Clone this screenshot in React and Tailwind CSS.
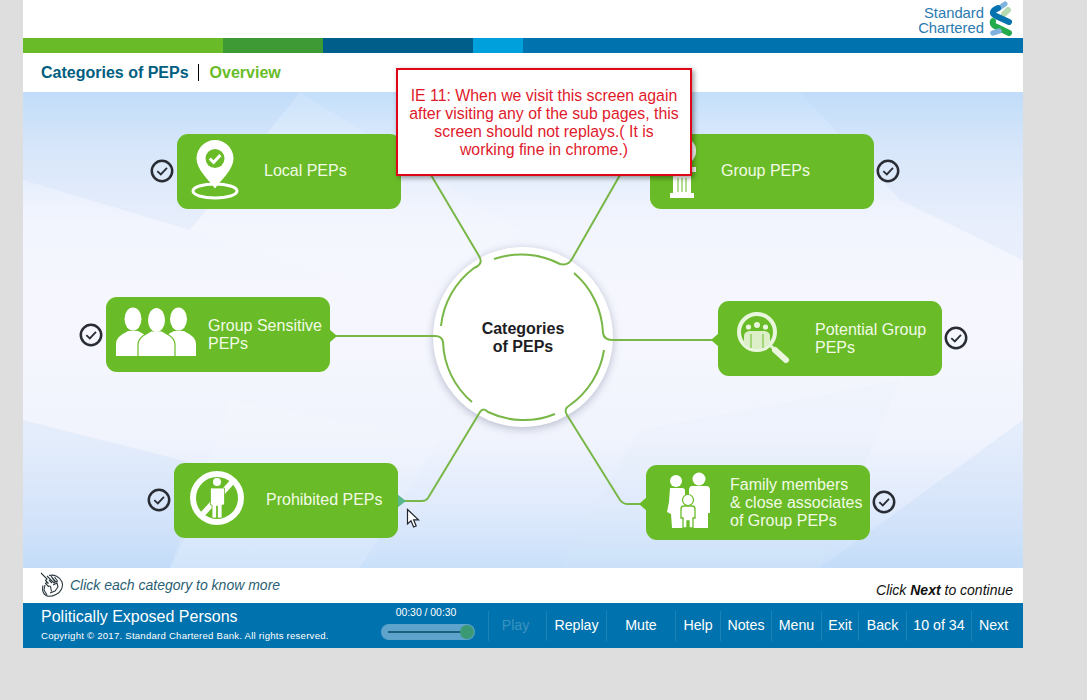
const G = "#69bc27";

function Check({ className }) {
  return (
    <svg className={className} width="24" height="24" viewBox="0 0 24 24" fill="none">
      <circle cx="12" cy="12" r="10.2" stroke="#292c33" strokeWidth="2.5" />
      <path d="M7.3 12.2 L10.8 15.4 L17 8.8" stroke="#292c33" strokeWidth="1.8" />
    </svg>
  );
}

function PinIcon() {
  return (
    <svg className="shrink-0" width="87" height="75" viewBox="0 0 87 75">
      <ellipse cx="38" cy="57" rx="22" ry="7" fill="none" stroke="#fff" strokeWidth="3" />
      <path d="M38 6a18.5 18.5 0 0 1 18.5 18.5c0 11-12 21-18.5 30c-6.5-9-18.5-19-18.5-30A18.5 18.5 0 0 1 38 6z" fill="#fff" />
      <circle cx="38" cy="24.5" r="9.5" fill={G} />
      <path d="M32.8 24.5l3.8 3.8l6.8-7.2" fill="none" stroke="#fff" strokeWidth="3" />
    </svg>
  );
}

function ColumnIcon() {
  return (
    <svg className="shrink-0" width="71" height="75" viewBox="0 0 71 75">
      <circle cx="32" cy="17" r="14" fill="#fff" />
      <rect x="30" y="33" width="16" height="5" fill="#fff" />
      <rect x="20" y="59" width="24" height="5" fill="#fff" />
      <rect x="23" y="40" width="18" height="19" fill="#fff" />
      <path d="M28 44v14M32 44v14M36 44v14" stroke={G} strokeWidth="1" />
    </svg>
  );
}

function PeopleIcon() {
  return (
    <svg className="shrink-0" width="102" height="75" viewBox="0 0 102 75">
      <ellipse cx="27" cy="22" rx="8.5" ry="11.5" fill="#fff" />
      <ellipse cx="72.5" cy="22" rx="8.5" ry="11.5" fill="#fff" />
      <path d="M10 59V47c0-7 7-10 12-13h10c6 3 11 6 11 13v12z" fill="#fff" />
      <path d="M90 59V47c0-7-7-10-12-13H68c-6 3-11 6-11 13v12z" fill="#fff" />
      <path d="M32 59.5V48c0-8 8-11 13-14h11c5 3 13 6 13 14v11.5z" fill="#fff" stroke={G} strokeWidth="1.2" />
      <ellipse cx="50.5" cy="23" rx="8.5" ry="12" fill="#fff" />
    </svg>
  );
}

function LensIcon() {
  return (
    <svg className="shrink-0" width="97" height="75" viewBox="0 0 97 75">
      <circle cx="39" cy="31" r="18" fill="none" stroke="#e9f5dc" strokeWidth="4" />
      <path d="M26 43v-8c0-3 2-4 5-5h16c3 1 5 2 5 5v8c-3 3-8 5-13 5s-10-2-13-5z" fill="#dcefc9" />
      <circle cx="30.5" cy="26" r="2.6" fill="#e9f5dc" />
      <circle cx="39" cy="24" r="3" fill="#e9f5dc" />
      <circle cx="47.5" cy="26" r="2.6" fill="#e9f5dc" />
      <path d="M33 33v14M45 33v14" stroke={G} strokeWidth="1" />
      <path d="M53 45l4 4" stroke="#e9f5dc" strokeWidth="3" />
      <path d="M57 49l11 10" stroke="#e9f5dc" strokeWidth="6" strokeLinecap="round" />
    </svg>
  );
}

function BanIcon() {
  return (
    <svg className="shrink-0" width="92" height="75" viewBox="0 0 92 75">
      <circle cx="43" cy="35" r="24" fill="none" stroke="#fff" strokeWidth="6" />
      <path d="M60 17L26 54" stroke="#fff" strokeWidth="5.5" />
      <circle cx="43" cy="19" r="4" fill="#fff" />
      <path d="M36.5 25h14v17h-2.5v13h-4.5V43h-1v12H38V42h-1.5z" fill="#fff" stroke={G} strokeWidth="0.8" />
    </svg>
  );
}

function FamilyIcon() {
  return (
    <svg className="shrink-0" width="84" height="75" viewBox="0 0 84 75">
      <circle cx="30" cy="16" r="6" fill="#fff" />
      <circle cx="53" cy="14" r="6.5" fill="#fff" />
      <path d="M24 23h12c2 0 3 1 3 3v22l-2 15H26l-1-14l-4-2l2-10z" fill="#fff" />
      <path d="M46 21h14c3 0 4 2 4 4v23h-2v15H47V44h-4V25c0-2 1-4 3-4z" fill="#fff" />
      <path d="M38 41h8c2 0 3 1 3 3v9h-2v10h-4v-7h-2v7h-4V53h-2v-9c0-2 1-3 3-3z" fill="#fff" stroke={G} strokeWidth="1.3" />
      <circle cx="42" cy="35" r="5.5" fill="#fff" stroke={G} strokeWidth="1.2" />
    </svg>
  );
}

function Node({ className, icon, lines, lift = "" }) {
  return (
    <div className={"absolute flex h-[75px] w-[224px] items-center rounded-[11px] bg-[#69bc27] " + className}>
      {icon}
      <div className={"whitespace-nowrap text-[16px] leading-[18px] text-[#f2fae6] " + lift}>
        {lines.map((l) => (
          <div key={l}>{l}</div>
        ))}
      </div>
    </div>
  );
}

function Logo() {
  return (
    <svg width="24" height="36" viewBox="0 0 24 36" fill="none" className="shrink-0">
      <path d="M16 3L9 8" stroke="#7fb2dc" strokeWidth="5" strokeLinecap="round" />
      <path d="M19 9L15 13" stroke="#b5d9b0" strokeWidth="6" strokeLinecap="round" />
      <path d="M9 7C2 10 3 13 7 15L20 21" stroke="#0473b0" strokeWidth="6" strokeLinecap="round" />
      <path d="M4 20C3 23 5 25 8 26L20 32" stroke="#23ac4c" strokeWidth="6" strokeLinecap="round" />
      <path d="M4 32L10 30" stroke="#7fb2dc" strokeWidth="5.5" strokeLinecap="round" />
    </svg>
  );
}

function HandIcon() {
  return (
    <svg width="24" height="26" viewBox="0 0 24 26" fill="none" stroke="#2d3a40" strokeWidth="1.1" className="shrink-0">
      <path d="M9 3.5C14 2 20 5 22 10c1.5 5-1 10-6 12.5c-4 2-8 2-10 1c-3-2-4-6-3-10" />
      <path d="M1 1l6 6l-1.5 1.5l3 3l-2-1l-1 1l3 3c1-1 1-1 2 0l1 5" />
      <path d="M7 4l7 7l1-1l-4-6M11 4l5 6l1.5-1l-3-4M9 8l3 3M13 13l4-2l1 4l-3 4l-5 2" />
      <path d="M5 13l-1 5l3 5" />
    </svg>
  );
}

const NAV = [
  ["w-[58px]", "Play", "text-[#3b93bf] pr-[4px]"],
  ["w-[60px]", "Replay", ""],
  ["w-[69px]", "Mute", ""],
  ["w-[45px]", "Help", ""],
  ["w-[51px]", "Notes", ""],
  ["w-[50px]", "Menu", ""],
  ["w-[37px]", "Exit", ""],
  ["w-[48px]", "Back", ""],
  ["w-[65px]", "10 of 34", ""],
  ["w-[44px]", "Next", ""],
];

export default function App() {
  return (
    <div className="min-h-[700px] bg-[#dedede] pl-[23px] font-['Liberation_Sans',Arial,sans-serif]">
      <div className="relative flex w-[1000px] flex-col">
        {/* header */}
        <div className="flex h-[38px] items-center justify-end gap-[5px] bg-white pr-[10px]">
          <div className="pt-[3px] text-right text-[14.8px] leading-[15px] text-[#2a7ab0]">
            <div>Standard</div>
            <div>Chartered</div>
          </div>
          <Logo />
        </div>
        {/* stripe */}
        <div className="flex h-[15px]">
          <div className="w-[200px] bg-[#69bc27]" />
          <div className="w-[100px] bg-[#3d9a35]" />
          <div className="w-[150px] bg-[#005e8a]" />
          <div className="w-[50px] bg-[#00a0dc]" />
          <div className="flex-1 bg-[#0072ad]" />
        </div>
        {/* title */}
        <div className="flex h-[39px] items-center bg-white pl-[18px] text-[16px] font-bold">
          <span className="text-[#005e80]">Categories of PEPs</span>
          <span className="ml-[9px] mr-[11px] h-[17px] w-px bg-black" />
          <span className="text-[#69bc27]">Overview</span>
        </div>
        {/* canvas */}
        <div className="relative h-[476px] overflow-hidden bg-[linear-gradient(180deg,#c3dffb_0%,#dfebfc_12%,#f3f5fe_28%,#f6f7fe_50%,#f1f4fd_72%,#dfeafc_88%,#c9e0fa_100%)]">
          <svg className="absolute inset-0" width="1000" height="476" viewBox="23 92 1000 476">
            <polygon points="23,92 300,92 190,230 23,180" fill="#b6d4f6" opacity="0.18" />
            <polygon points="23,420 220,470 170,568 23,568" fill="#aecdf5" opacity="0.18" />
            <polygon points="800,92 1023,92 1023,260 900,200" fill="#b6d4f6" opacity="0.18" />
            <polygon points="820,568 1023,420 1023,568" fill="#aecdf5" opacity="0.18" />
            <polygon points="300,92 520,230 400,300 190,230" fill="#ffffff" opacity="0.12" />
            <polygon points="230,400 440,440 360,568 170,568" fill="#ffffff" opacity="0.14" />
            <polygon points="640,430 900,380 820,568 560,568" fill="#dbe7fb" opacity="0.14" />
          </svg>

          <div className="absolute left-[410px] top-[155px] flex h-[180px] w-[180px] items-center justify-center rounded-full bg-white shadow-[0_2px_8px_rgba(90,100,130,0.4)]">
            <div className="pt-[2px] text-center text-[16px] font-bold leading-[18px] text-[#1d1d23]">
              Categories
              <br />
              of PEPs
            </div>
          </div>

          <svg className="absolute inset-0" width="1000" height="476" viewBox="23 92 1000 476" fill="none" stroke="#79b748" strokeWidth="2">
            <path d="M431 175L479 256Q484 264 474 268A83 83 0 0 0 441 326" />
            <path d="M620 175L572 259Q568 266 560 264A83 83 0 0 0 494 259" />
            <path d="M574 273A83 83 0 0 1 603 333Q604 340 612 340L712 340" />
            <path d="M604 350A83 83 0 0 1 570 405Q563 409 567 415L620 500Q623 504 628 504L640 504" />
            <path d="M555 414A83 83 0 0 1 488 412Q483 407 480 412L428 498Q426 501 422 501L400 501" />
            <path d="M472 402A82 82 0 0 1 443 342Q442 336 435 336L332 336" />
            <polygon points="329,329 337,336 329,343" fill="#69bc27" stroke="none" />
            <polygon points="719,333 711,340 719,347" fill="#69bc27" stroke="none" />
            <polygon points="397,494 406,501 397,508" fill="#5cb78c" stroke="none" />
            <polygon points="647,497 639,504 647,511" fill="#69bc27" stroke="none" />
          </svg>

          <Node className="left-[154px] top-[42px]" lift="mb-[2px]" icon={<PinIcon />} lines={["Local PEPs"]} />
          <Node className="left-[627px] top-[42px]" lift="mb-[2px]" icon={<ColumnIcon />} lines={["Group PEPs"]} />
          <Node className="left-[83px] top-[205px]" icon={<PeopleIcon />} lines={["Group Sensitive", "PEPs"]} />
          <Node className="left-[695px] top-[209px]" icon={<LensIcon />} lines={["Potential Group", "PEPs"]} />
          <Node className="left-[151px] top-[371px]" lift="mb-[2px]" icon={<BanIcon />} lines={["Prohibited PEPs"]} />
          <Node className="left-[623px] top-[373px]" icon={<FamilyIcon />} lines={["Family members", "& close associates", "of Group PEPs"]} />

          <Check className="absolute left-[127px] top-[67px]" />
          <Check className="absolute left-[853px] top-[67px]" />
          <Check className="absolute left-[56px] top-[231px]" />
          <Check className="absolute left-[921px] top-[234px]" />
          <Check className="absolute left-[124px] top-[396px]" />
          <Check className="absolute left-[849px] top-[398px]" />

          <svg className="absolute left-[383px] top-[416px]" width="14" height="21" viewBox="0 0 14 21">
            <path d="M1.5 1.5V16L5 12.8L7.6 19L10.2 18L7.6 11.8H12.5z" fill="#fff" stroke="#22262c" strokeWidth="1.2" />
          </svg>
        </div>
        {/* instruction bar */}
        <div className="flex h-[35px] bg-white">
          <div className="ml-[17px] mt-[4px] self-start">
            <HandIcon />
          </div>
          <div className="ml-[6px] mt-[9px] self-start text-[14px] italic leading-[16px] text-[#2b5f73]">
            Click each category to know more
          </div>
          <div className="ml-auto mr-[10px] mt-[14px] self-start text-[14px] italic leading-[16px] text-[#111]">
            Click <b>Next</b> to continue
          </div>
        </div>
        {/* footer */}
        <div className="flex h-[45px] bg-[#0072ad] text-white">
          <div className="ml-[18px] w-[340px] shrink-0 pt-[4px]">
            <div className="text-[16px] leading-[19px]">Politically Exposed Persons</div>
            <div className="mt-[4px] text-[9.6px] leading-[12px] tracking-[0.23px]">
              Copyright © 2017. Standard Chartered Bank. All rights reserved.
            </div>
          </div>
          <div className="flex w-[94px] shrink-0 flex-col items-center pt-[4px]">
            <div className="pr-[4px] text-[10.4px] leading-[12px]">00:30 / 00:30</div>
            <div className="relative mt-[5px] flex h-[16px] w-[94px] items-center rounded-full bg-[#5ea3cc] pl-[7px]">
              <div className="h-[2px] w-[74px] bg-[#1d5f7f]" />
              <div className="absolute right-[1px] top-[1px] h-[14px] w-[14px] rounded-full bg-[#3b9a73]" />
            </div>
          </div>
          <div className="ml-[13px] flex h-[30px] self-center">
            {NAV.map(([w, label, color]) => (
              <div
                key={label}
                className={"flex items-center justify-center border-l border-[#1a82b6] text-[14.2px] " + w + " " + color}
              >
                {label}
              </div>
            ))}
          </div>
        </div>

        {/* callout */}
        <div className="absolute left-[373px] top-[68px] z-10 flex h-[108px] w-[296px] flex-col items-center justify-center border-2 border-[#e0061a] bg-white pt-[2px] text-center text-[15.85px] leading-[18px] text-[#e01a2c] shadow-[2px_2px_5px_rgba(0,0,0,0.4)]">
          <div>IE 11: When we visit this screen again</div>
          <div>after visiting any of the sub pages, this</div>
          <div>screen should not replays.( It is</div>
          <div>working fine in chrome.)</div>
        </div>
      </div>
    </div>
  );
}
